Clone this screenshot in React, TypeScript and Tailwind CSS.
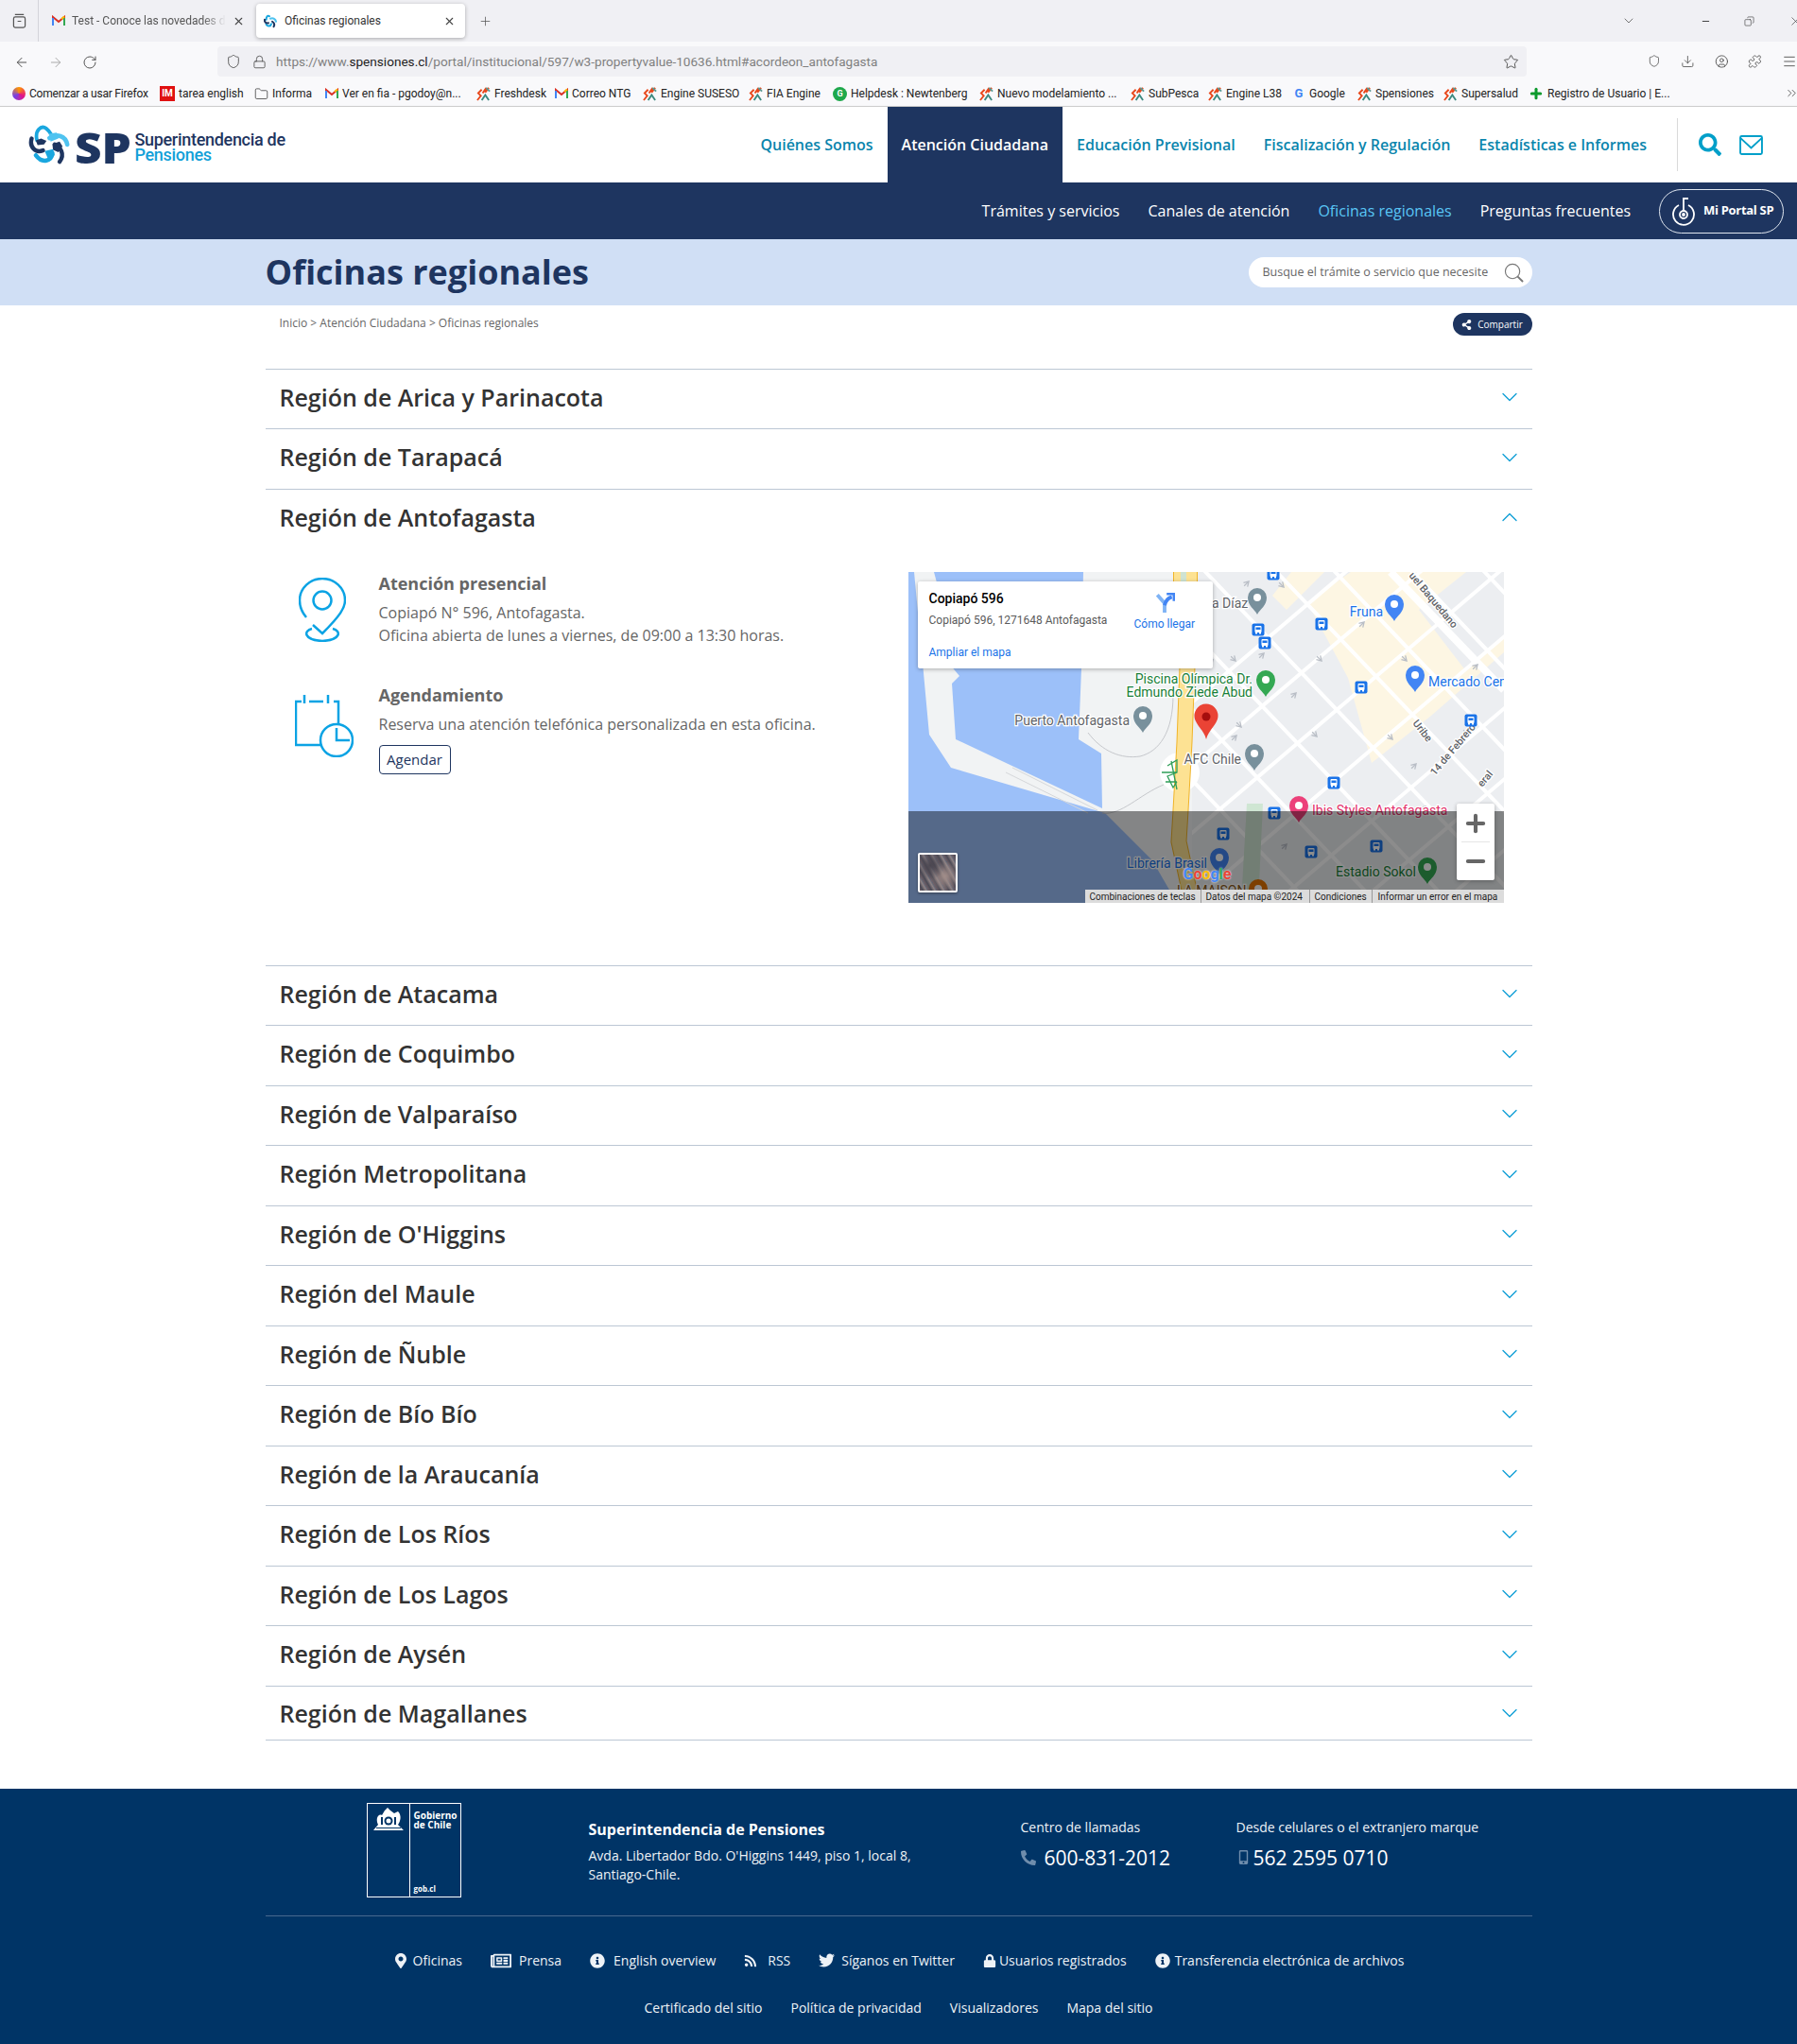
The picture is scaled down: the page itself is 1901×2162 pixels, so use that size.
import React from 'react';
import { ArrowLeft, ArrowRight, RotateCw, Shield, Lock, Star, Download, Menu, Puzzle, CircleUser, Plus, X, ChevronDown, ChevronUp, Minus, Folder, Copy, ChevronsRight } from 'lucide-react';
import { FaMapMarkerAlt, FaRegNewspaper, FaInfoCircle, FaRss, FaTwitter, FaLock, FaPhone, FaMobileAlt, FaSearch, FaShareAlt } from 'react-icons/fa';

const Gmail = () => (
  <svg viewBox="0 0 14 12" className="w-[14px] h-[12px] shrink-0" fill="none">
    <path d="M1 11V2l6 5 6-5v9" stroke="#d93025" strokeWidth="2" />
    <path d="M1 11V3" stroke="#4285f4" strokeWidth="2" />
    <path d="M13 11V3" stroke="#34a853" strokeWidth="2" />
    <path d="M10 4l3-2.500" stroke="#fbbc04" strokeWidth="2" />
  </svg>
);
const Zig = () => (
  <svg viewBox="0 0 16 17" className="w-[15px] h-[16px] shrink-0" fill="none" strokeWidth="2">
    <path d="M1 16l4-5-3-3 4-4" stroke="#e8481c" />
    <path d="M6 16l4-6 4 6" stroke="#3d8a80" />
    <path d="M7 8l4-6-1 5 4-5" stroke="#e8481c" />
    <path d="M11 2l4 4" stroke="#5c9a94" />
  </svg>
);
const StarFav = () => (
  <svg viewBox="25 25 140 135" className="w-[14px] h-[15px] shrink-0" fill="none" strokeLinecap="round" strokeWidth="20">
    <path d="M52 75C50 45 70 25 85 40" stroke="#1aa7df" />
    <path d="M95 65C120 55 150 65 155 95" stroke="#4fc3f0" />
    <path d="M115 95C130 105 145 125 130 150" stroke="#1e3560" />
    <path d="M105 120C100 145 70 155 50 125" stroke="#1aa7df" />
    <path d="M35 75C30 100 50 120 75 110" stroke="#1e3560" />
  </svg>
);
const Logo = () => (
  <svg viewBox="25 25 140 135" className="w-[44px] h-[44px] shrink-0" fill="none" strokeLinecap="round">
    <path d="M54 78C46 45 68 26 85 38C95 45 100 54 106 64" stroke="#1aa7df" strokeWidth="12" />
    <path d="M50 78l18-6 18 8-8 12-22 2z" fill="#1e3560" />
    <path d="M96 70C120 54 150 62 156 92" stroke="#4fc3f0" strokeWidth="15" />
    <path d="M94 56l26-4 6 20-26 10z" fill="#4fc3f0" />
    <path d="M114 92C132 100 150 124 130 150" stroke="#1e3560" strokeWidth="14" />
    <path d="M106 90l24-8 10 16-14 20-18-8z" fill="#1e3560" />
    <path d="M106 120C104 148 72 158 50 128" stroke="#1aa7df" strokeWidth="14" />
    <path d="M80 114l28-6 6 20-24 10z" fill="#1aa7df" />
    <path d="M36 72C28 100 48 122 74 112" stroke="#1e3560" strokeWidth="14" />
  </svg>
);

const bookmarks: { icon: React.ReactNode; label: string; cls: string }[] = [
  { icon: <span className="w-[14px] h-[14px] rounded-full bg-[conic-gradient(#ff9500,#e31587,#7542e5,#ff9500)] shrink-0" />, label: 'Comenzar a usar Firefox', cls: 'w-[126px] tracking-[-0.2px]' },
  { icon: <span className="w-[16px] h-[16px] bg-[#e01010] text-white text-[10px] leading-[16px] font-bold text-center shrink-0">IM</span>, label: 'tarea english', cls: 'w-[68px]' },
  { icon: <Folder size={15} strokeWidth={1.3} className="text-[#444] shrink-0" />, label: 'Informa', cls: 'w-[44px]' },
  { icon: <Gmail />, label: 'Ver en fia - pgodoy@n...', cls: 'w-[130px]' },
  { icon: <Zig />, label: 'Freshdesk', cls: 'w-[52px]' },
  { icon: <Gmail />, label: 'Correo NTG', cls: 'w-[63px]' },
  { icon: <Zig />, label: 'Engine SUSESO', cls: 'w-[81px]' },
  { icon: <Zig />, label: 'FIA Engine', cls: 'w-[58px]' },
  { icon: <span className="w-[15px] h-[15px] rounded-full bg-[#1ea84b] text-white text-[9px] leading-[15px] text-center font-bold shrink-0">G</span>, label: 'Helpdesk : Newtenberg', cls: 'w-[124px]' },
  { icon: <Zig />, label: 'Nuevo modelamiento ...', cls: 'w-[129px]' },
  { icon: <Zig />, label: 'SubPesca', cls: 'w-[51px]' },
  { icon: <Zig />, label: 'Engine L38', cls: 'w-[58px]' },
  { icon: <span className="w-[14px] text-[13px] leading-[14px] font-bold text-[#4285f4] text-center shrink-0">G</span>, label: 'Google', cls: 'w-[39px]' },
  { icon: <Zig />, label: 'Spensiones', cls: 'w-[60px]' },
  { icon: <Zig />, label: 'Supersalud', cls: 'w-[59px]' },
  { icon: <Plus size={16} strokeWidth={4.5} className="text-[#0c9a2c] shrink-0" />, label: 'Registro de Usuario | E...', cls: 'w-[126px]' },
];

const BrowserChrome = () => (
  <div className="font-['Roboto',sans-serif] text-[#222]">
    <div className="h-[44px] bg-[#f0f0f4] flex items-stretch">
      <div className="w-[41px] flex items-center justify-center border-r border-[#d4d4da]">
        <svg viewBox="0 0 16 18" className="w-[15px] h-[17px]" fill="none" stroke="#555" strokeWidth="1.3"><rect x="1.500" y="4" width="13" height="12" rx="2" /><path d="M3 1.500h10M6 9h4" /></svg>
      </div>
      <div className="w-[225px] ml-[5px] flex items-center pl-[9px] pr-[12px] gap-[7px]">
        <Gmail />
        <span className="flex-1 text-[12px] overflow-hidden whitespace-nowrap text-[#555] [mask-image:linear-gradient(to_right,black_85%,transparent)]">Test - Conoce las novedades de</span>
        <X size={13} className="text-[#444]" />
      </div>
      <div className="w-[221px] my-[4px] bg-white rounded-[4px] shadow-[0_1px_4px_rgba(0,0,0,0.3)] flex items-center pl-[8px] pr-[10px] gap-[8px]">
        <StarFav />
        <span className="flex-1 text-[12px] text-[#333]">Oficinas regionales</span>
        <X size={13} className="text-[#444]" />
      </div>
      <div className="ml-[14px] flex items-center"><Plus size={15} strokeWidth={1.2} className="text-[#555]" /></div>
      <div className="ml-auto flex items-center">
        <ChevronDown size={16} strokeWidth={1.2} className="text-[#555] mr-[68px]" />
        <Minus size={11} className="text-[#333] mr-[35px]" />
        <Copy size={11} strokeWidth={1.3} className="text-[#333] mr-[36px] scale-x-[-1]" />
        <X size={15} strokeWidth={1} className="text-[#333] mr-[-6px]" />
      </div>
    </div>
    <div className="h-[44px] bg-[#f9f9fb] flex items-center">
      <div className="w-[230px] flex items-center text-[#555] pl-[15px] gap-[20px]">
        <ArrowLeft size={16} strokeWidth={1.5} />
        <ArrowRight size={16} strokeWidth={1.5} className="text-[#aaa]" />
        <RotateCw size={16} strokeWidth={1.5} />
      </div>
      <div className="w-[1385px] h-[32px] bg-[#f0f0f4] rounded-[4px] flex items-center pl-[9px] pr-[8px] mt-[-2px]">
        <Shield size={16} strokeWidth={1.4} className="text-[#555]" />
        <Lock size={15} strokeWidth={1.4} className="text-[#555] ml-[12px]" />
        <span className="ml-[10px] text-[13.6px] text-[#808080]">https://www.<span className="text-[#222]">spensiones.cl</span>/portal/institucional/597/w3-propertyvalue-10636.html#acordeon_antofagasta</span>
        <Star size={17} strokeWidth={1.4} className="text-[#555] ml-auto" />
      </div>
      <div className="flex-1 flex items-center pl-[128px] gap-[21px] text-[#555] overflow-hidden mt-[-3px]">
        <Shield size={15} strokeWidth={1.4} />
        <Download size={16} strokeWidth={1.4} />
        <CircleUser size={16} strokeWidth={1.5} />
        <Puzzle size={16} strokeWidth={1.4} />
        <Menu size={16} strokeWidth={1.4} className="shrink-0" />
      </div>
    </div>
    <div className="h-[25px] bg-[#f9f9fb] border-b border-[#ccc] flex items-center pl-[13px] pb-[2px] gap-[12px] relative overflow-hidden">
      {bookmarks.map((b) => (
        <div key={b.label} className="flex items-center gap-[4px] shrink-0">
          {b.icon}
          <span className={`${b.cls} text-[12px] whitespace-nowrap text-[#222]`}>{b.label}</span>
        </div>
      ))}
      <ChevronsRight size={15} strokeWidth={1.2} className="absolute right-[-2px] top-[3px] text-[#333]" />
    </div>
  </div>
);

const nav = ['Quiénes Somos', 'Atención Ciudadana', 'Educación Previsional', 'Fiscalización y Regulación', 'Estadísticas e Informes'];

const Header = () => (
  <header className="h-[80px] flex items-stretch bg-white">
    <div className="flex items-center pl-[30px]">
      <Logo />
      <span className="inline-block origin-left scale-x-[1.1] font-['Open_Sans',sans-serif] font-extrabold text-[45px] leading-none text-[#1e3560] ml-[5px] mt-[5px]">SP</span>
      <div className="ml-[9px] mt-[5px] font-['Roboto',sans-serif] font-medium text-[18px] leading-[16px] tracking-[-0.3px]">
        <div className="text-[#1e3560]">Superintendencia de</div>
        <div className="text-[#12a0d8]">Pensiones</div>
      </div>
    </div>
    <nav className="ml-auto flex items-stretch">
      {nav.map((n, i) => (
        <a key={n} className={i === 1 ? 'px-[15px] flex items-center text-[16px] font-semibold bg-[#1e3560] text-white' : 'px-[15px] flex items-center text-[16px] font-semibold text-[#0a85ad]'}>{n}</a>
      ))}
    </nav>
    <div className="flex items-center ml-[17px] pr-[36px]">
      <div className="w-px h-[56px] bg-[#d9d9d9] mr-[22px]" />
      <FaSearch size={24} className="text-[#009fc9]" />
      <svg viewBox="0 0 26 22" className="w-[25px] h-[21px] ml-[19px]" fill="none" stroke="#009fc9" strokeWidth="2"><rect x="1" y="1" width="24" height="20" rx="1.500" /><path d="M1 3l12 11L25 3" /></svg>
    </div>
  </header>
);

const sub = ['Trámites y servicios', 'Canales de atención', 'Oficinas regionales', 'Preguntas frecuentes'];

const SubNav = () => (
  <div className="h-[60px] bg-[#1e3560] flex items-center justify-end gap-[30px] pr-[14px]">
    {sub.map((s, i) => (
      <a key={s} className={i === 2 ? 'text-[16px] text-[#59c6f5]' : 'text-[16px] text-white'}>{s}</a>
    ))}
    <div className="w-[132px] h-[47px] border border-[#dfe6ef] rounded-full flex items-center pl-[12px] gap-[8px]">
      <svg viewBox="0 0 26 32" className="w-[26px] h-[32px]" fill="none" stroke="white" strokeWidth="1.8"><path d="M8 10a11 11 0 1 0 10 0" /><circle cx="13" cy="20" r="4" /><circle cx="13" cy="20" r="1" /><path d="M13 16V3h5" /></svg>
      <span className="text-[13px] font-bold text-white tracking-[-0.3px] whitespace-nowrap">Mi Portal SP</span>
    </div>
  </div>
);

const TitleBand = () => (
  <div className="h-[70px] bg-[#d0dff5]">
    <div className="w-[1340px] mx-auto h-full flex items-center justify-between">
      <h1 className="text-[36px] font-bold text-[#1e3560]">Oficinas regionales</h1>
      <div className="w-[300px] h-[32px] bg-white rounded-full flex items-center pl-[15px] pr-[9px]">
        <span className="flex-1 text-[12.5px] text-[#666] whitespace-nowrap">Busque el trámite o servicio que necesite</span>
        <svg viewBox="0 0 22 22" className="w-[21px] h-[21px]" fill="none" stroke="#777" strokeWidth="1.2"><circle cx="9.500" cy="9.500" r="8" /><path d="M15 15l6 6" strokeWidth="2" /></svg>
      </div>
    </div>
  </div>
);

const Crumbs = () => (
  <div className="w-[1340px] mx-auto h-[67px] flex justify-between items-start pt-[8px]">
    <p className="pl-[15px] pt-[3px] text-[12px] leading-[16px] text-[#666]">Inicio &gt; Atención Ciudadana &gt; Oficinas regionales</p>
    <a className="w-[84px] h-[24px] bg-[#1e3560] rounded-full text-white flex items-center justify-center gap-[6px] text-[10px]"><FaShareAlt size={11} />Compartir</a>
  </div>
);

const rowKinds = {
  upper: 'h-[63.4px] border-t',
  lower: 'h-[63.5px] border-t',
  last: 'h-[58px] border-t border-b',
};

const Row = ({ title, open, kind }: { title: string; open?: boolean; kind: keyof typeof rowKinds }) => (
  <div className={`${rowKinds[kind]} border-[#bcc7d4] flex items-center pl-[15px] pr-[16px] justify-between`}>
    <h2 className={kind === 'last' ? 'text-[25px] font-semibold text-[#333] mt-[2px]' : 'text-[25px] font-semibold text-[#333] mt-[-3px]'}>{title}</h2>
    {open ? <ChevronUp size={28} strokeWidth={1.15} className="text-[#119fd6] mt-[-4px] mr-[-6px]" /> : <ChevronDown size={28} strokeWidth={1.15} className={kind === 'last' ? 'text-[#119fd6] mt-[1px] mr-[-6px]' : 'text-[#119fd6] mt-[-4px] mr-[-6px]'} />}
  </div>
);

const Pin = ({ x, y, c, glyph }: { x: number; y: number; c: string; glyph?: string }) => (
  <g transform={`translate(${x} ${y})`}>
    <path d="M0 15C-3 9-10 6-10 -3A10 10 0 0 1 10 -3C10 6 3 9 0 15Z" fill={c} />
    <circle cx="0" cy="-3" r="4" fill={glyph || 'white'} />
  </g>
);
const Bus = ({ x, y }: { x: number; y: number }) => (
  <g transform={`translate(${x - 6.500} ${y - 6.500})`}>
    <rect width="13" height="13" rx="2" fill="#1a73e8" />
    <rect x="3" y="2.500" width="7" height="7" rx="1" fill="white" />
    <rect x="4" y="4" width="5" height="2.500" fill="#1a73e8" />
    <rect x="3.500" y="9.500" width="2" height="1.500" fill="white" />
    <rect x="7.500" y="9.500" width="2" height="1.500" fill="white" />
  </g>
);

const nw = [-640, -560, -474, -409, -330, -251, -170, -95];
const ne = [393, 460, 531, 604, 680, 755, 830, 905];
const buses: [number, number][] = [[370, 61], [377, 75], [386, 2], [437, 55], [479, 122], [595, 157], [450, 223], [387, 255], [333, 277], [426, 296], [495, 290]];
const arrows: [number, number, number][] = [[358, 12, 45], [395, 14, 135], [344, 92, 135], [320, 95, 45], [374, 88, 45], [435, 92, 135], [480, 55, 45], [525, 92, 135], [350, 162, 135], [345, 175, 45], [408, 130, 45], [430, 172, 135], [510, 175, 135], [535, 205, 45], [590, 170, 135], [600, 100, 45], [398, 290, 45], [510, 255, 135], [545, 250, 45]];

const MapBox = () => (
  <div className="relative w-[630px] h-[350px] overflow-hidden bg-[#f1f3f4] font-['Roboto',sans-serif]">
    <svg viewBox="0 0 630 350" className="block w-[630px] h-[350px]">
      <defs>
        <clipPath id="city"><path d="M300 0H630V350H300Z" /></clipPath>
      </defs>
      <rect width="630" height="350" fill="#f1f3f4" />
      <path d="M0 0H6L14 85L22 172L45 207L208 255L258 305L284 350H0Z" fill="#9cc0f9" />
      <path d="M27 0H185L183 102L180 177L204 192L205 250L50 177L46 118L54 110L44 98L35 30Z" fill="#9cc0f9" />
      <path d="M103 212L190 255M110 207L200 252" fill="none" stroke="#d5d7da" />
      <path d="M190 170C205 190 225 198 245 195C265 190 280 170 280 130" fill="none" stroke="#c6c8cc" />
      <path d="M205 255C225 258 245 235 270 225" fill="none" stroke="#c6c8cc" />
      <g clipPath="url(#city)">
        <rect x="300" width="330" height="350" fill="#eceef1" />
        <path d="M422 32L468 0H630V85L553 152L490 202L465 112Z" fill="#fdf6e3" />
        <path d="M405 0L440 0L400 40L385 25Z" fill="#fdf6e3" />
        <path d="M540 40L590 0H630V70L590 105Z" fill="#eceef1" />
        {nw.map((c) => <line key={c} x1="250" y1={1.05 * 250 + c} x2="700" y2={1.05 * 700 + c} stroke="white" strokeWidth="4" />)}
        {ne.map((d) => <line key={d} x1="250" y1={-0.85 * 250 + d} x2="700" y2={-0.85 * 700 + d} stroke="white" strokeWidth="4" />)}
        <path d="M510 0L630 125" stroke="white" strokeWidth="8" />
      </g>
      <path d="M358 245L352 350H370L375 245Z" fill="#cfe6d3" />
      <circle cx="287" cy="212" r="21" fill="white" />
      <path d="M295 0V100L292 180L288 252L286 285L300 350" fill="none" stroke="#f0b429" strokeWidth="17" />
      <path d="M295 0V100L292 180L288 252L286 285L300 350" fill="none" stroke="#fde293" strokeWidth="15" />
      <path d="M293 0V102" stroke="#f0b429" strokeWidth="26" />
      <path d="M293 0V102" stroke="#fde293" strokeWidth="24" />
      <path d="M291 0V102" stroke="#cfe3d2" strokeWidth="6" />
      <path d="M274 205L284 199L284 212L274 216L280 228L284 222M268 212L284 212M272 222L284 222M278 200L284 230" stroke="#2f9e58" strokeWidth="1.300" fill="none" />
      {arrows.map(([x, y, r], i) => <path key={i} d="M-3 2L0 -3L3 2M0 -3V4" transform={`translate(${x} ${y}) rotate(${r})`} fill="none" stroke="#b9bec6" strokeWidth="1.300" />)}
      <g className="[paint-order:stroke] stroke-white stroke-[2.5px]" fontSize="14">
        <text x="321" y="38" fill="#5f6368">a Díaz</text>
        <text x="502" y="47" textAnchor="end" fill="#1a73e8">Fruna</text>
        <text x="550" y="121" fill="#1a73e8">Mercado Central</text>
        <text x="364" y="118" textAnchor="end" fill="#188038">Piscina Olímpica Dr.</text>
        <text x="364" y="132" textAnchor="end" fill="#188038">Edmundo Ziede Abud</text>
        <text x="234" y="162" textAnchor="end" fill="#5f6368">Puerto Antofagasta</text>
        <text x="352" y="203" textAnchor="end" fill="#5f6368">AFC Chile</text>
        <text x="427" y="257" fill="#e3306b">Ibis Styles Antofagasta</text>
        <text x="316" y="313" textAnchor="end" fill="#1a73e8">Librería Brasil</text>
        <text x="537" y="322" textAnchor="end" fill="#188038">Estadio Sokol</text>
        <text x="284" y="342" fill="#8a5a20">LA MAISON</text>
      </g>
      <g className="[paint-order:stroke] stroke-white stroke-[2.5px]" fontSize="11" fill="#5f6368" fontWeight="500">
        <text transform="translate(529 4) rotate(50)">uel Baquedano</text>
        <text transform="translate(533 160) rotate(52)">Uribe</text>
        <text transform="translate(557 216) rotate(-50)">14 de Febrero</text>
        <text transform="translate(607 228) rotate(-50)">eral</text>
      </g>
      <Pin x={369} y={30} c="#78909c" />
      <Pin x={514} y={37} c="#4285f4" />
      <Pin x={536} y={112} c="#4285f4" />
      <Pin x={378} y={117} c="#34a853" />
      <Pin x={248} y={155} c="#78909c" />
      <Pin x={366} y={195} c="#78909c" />
      <Pin x={413} y={250} c="#ec407a" />
      <Pin x={329} y={305} c="#4285f4" />
      <Pin x={549} y={315} c="#34a853" />
      <Pin x={370} y={338} c="#e37400" />
      {buses.map(([x, y]) => <Bus key={`${x}-${y}`} x={x} y={y} />)}
      <g transform="translate(315 153)">
        <path d="M0 24C-3 13-12.500 8-12.500 -1A12.500 12.500 0 0 1 12.500 -1C12.500 8 3 13 0 24Z" fill="#ea4335" />
        <circle cy="0" r="4.500" fill="#a50e0e" />
      </g>
    </svg>
    <div className="absolute left-0 right-0 bottom-0 h-[97px] bg-black/45" />
    <span className="absolute left-[291px] top-[310px] text-[16px] leading-[20px] font-bold [text-shadow:0_0_2px_white]"><span className="text-[#4285f4]">G</span><span className="text-[#ea4335]">o</span><span className="text-[#fbbc04]">o</span><span className="text-[#4285f4]">g</span><span className="text-[#34a853]">l</span><span className="text-[#ea4335]">e</span></span>
    <div className="absolute left-[10px] top-[10px] w-[312px] h-[92px] bg-white rounded-[2px] shadow-[0_1px_4px_rgba(0,0,0,0.3)]">
      <div className="absolute left-[12px] top-[9px] text-[14px] leading-[18px] font-medium text-black">Copiapó 596</div>
      <div className="absolute left-[12px] top-[33px] text-[12px] leading-[16px] text-[#5b5b5b] whitespace-nowrap">Copiapó 596, 1271648 Antofagasta</div>
      <div className="absolute left-[12px] top-[67px] text-[12px] leading-[16px] text-[#1a73e8]">Ampliar el mapa</div>
      <svg viewBox="0 0 20 20" className="absolute left-[250px] top-[12px] w-[22px] h-[22px]" fill="none" strokeWidth="3.500"><path d="M3 2l7 8v9" stroke="#7fb3f5" /><path d="M10 12c1-4 3-7 7-8" stroke="#4285f4" /><path d="M12 1h7v7" stroke="#4285f4" strokeWidth="2.500" /></svg>
      <div className="absolute left-[229px] top-[37px] w-[64px] text-center text-[12px] leading-[16px] text-[#1a73e8] whitespace-nowrap">Cómo llegar</div>
    </div>
    <div className="absolute left-[580px] top-[245px] w-[40px] h-[81px] bg-white rounded-[2px] flex flex-col items-center justify-between py-[6.5px] text-[#666] shadow-[0_1px_4px_rgba(0,0,0,0.3)]">
      <Plus size={28} strokeWidth={3.5} />
      <div className="absolute left-[5px] right-[5px] top-[40px] h-px bg-[#e6e6e6]" />
      <Minus size={28} strokeWidth={3.5} />
    </div>
    <div className="absolute left-[10px] top-[297px] w-[42px] h-[42px] border-2 border-white rounded-[2px] bg-[radial-gradient(circle_at_30%_30%,#4a4650_0,transparent_40%),radial-gradient(circle_at_70%_60%,#a08c88_0,transparent_45%),repeating-linear-gradient(60deg,#6f6068,#4b4a55_3px,#8f8385_6px,#5a6070_8px)] shadow-[0_1px_3px_rgba(0,0,0,0.4)]" />
    <div className="absolute left-[187px] right-0 bottom-0 h-[14px] flex bg-[#dcdcdc] text-[10px] leading-[15px] text-[#222] whitespace-nowrap">
      <span className="w-[123px] pl-[5px] border-r border-[#999]">Combinaciones de teclas</span>
      <span className="w-[115px] pl-[5px] border-r border-[#999]">Datos del mapa ©2024</span>
      <span className="w-[66px] pl-[5px] border-r border-[#999]">Condiciones</span>
      <span className="pl-[6px]">Informar un error en el mapa</span>
    </div>
  </div>
);

const Panel = () => (
  <div className="h-[440.8px] flex">
    <div className="w-[680px]">
      <div className="flex pt-[24px]">
        <div className="w-[120px] pl-[35px] pt-[7px]">
          <svg viewBox="0 0 50 68" className="w-[50px] h-[68px]" fill="none" stroke="#0ba3e4" strokeWidth="2.500"><path d="M8 42C3 36 1 30 1 24C1 11 12 1 25 1C38 1 49 11 49 24C49 32 44 40 25 59L15 50" /><circle cx="25" cy="24" r="9.500" /><path d="M14 54C5 56 5 66 25 67C45 66 45 56 36 54" /></svg>
        </div>
        <div>
          <h3 className="text-[18px] leading-[26px] font-bold text-[#666]">Atención presencial</h3>
          <p className="mt-[6px] text-[16px] leading-[24px] text-[#666]">Copiapó N° 596, Antofagasta.<br />Oficina abierta de lunes a viernes, de 09:00 a 13:30 horas.</p>
        </div>
      </div>
      <div className="flex mt-[38px]">
        <div className="w-[120px] pl-[31px] pt-[13px]">
          <svg viewBox="0 0 62 66" className="w-[62px] h-[66px]" fill="none" stroke="#0ba3e4" strokeWidth="2.500"><path d="M7 7H1V53H27" /><path d="M10 0V9M15 7H30M35 0V9" /><path d="M41 7H46V30" /><circle cx="44" cy="48" r="17" /><path d="M44 35V48H58" /></svg>
        </div>
        <div>
          <h3 className="text-[18px] leading-[26px] font-bold text-[#666]">Agendamiento</h3>
          <p className="mt-[6px] text-[16px] leading-[24px] text-[#666]">Reserva una atención telefónica personalizada en esta oficina.</p>
          <button className="mt-[10px] w-[76px] h-[31px] border border-[#1e3560] rounded-[4px] text-[15px] text-[#1e3560] flex items-center justify-center">Agendar</button>
        </div>
      </div>
    </div>
    <div className="pt-[25px]"><MapBox /></div>
  </div>
);

const before = ['Región de Arica y Parinacota', 'Región de Tarapacá'];
const after = ['Región de Atacama', 'Región de Coquimbo', 'Región de Valparaíso', 'Región Metropolitana', "Región de O'Higgins", 'Región del Maule', 'Región de Ñuble', 'Región de Bío Bío', 'Región de la Araucanía', 'Región de Los Ríos', 'Región de Los Lagos', 'Región de Aysén'];

const links: [React.ReactNode, string, string][] = [
  [<FaMapMarkerAlt size={16} />, 'Oficinas', 'w-[21px]'],
  [<FaRegNewspaper size={22} />, 'Prensa', 'w-[30px]'],
  [<FaInfoCircle size={16} />, 'English overview', 'w-[25px]'],
  [<FaRss size={14} />, 'RSS', 'w-[25px]'],
  [<FaTwitter size={17} />, 'Síganos en Twitter', 'w-[24px]'],
  [<FaLock size={14} />, 'Usuarios registrados', 'w-[17px]'],
  [<FaInfoCircle size={16} />, 'Transferencia electrónica de archivos', 'w-[21px]'],
];

const Footer = () => (
  <footer className="h-[270px] bg-[#003466] text-[#eef2f6]">
    <div className="w-[1340px] mx-auto">
      <div className="h-[135px] border-b border-[#48698f] grid grid-cols-[342px_457px_228px_1fr]">
        <div className="pl-[107px] pt-[15px]">
          <div className="w-[100px] h-[100px] border border-white flex">
            <div className="w-[45px] border-r border-white pt-[4px] flex justify-center">
              <svg viewBox="0 0 34 26" className="w-[34px] h-[26px]" fill="white"><path d="M6 18C3 12 6 6 10 8L13 3L16 0L19 3L23 6L27 4C31 8 30 14 27 18L33 24H1Z" /><circle cx="17" cy="14" r="4.500" fill="#003466" /><circle cx="17" cy="14" r="2.500" /><path d="M9 10h2v8H9zM23 10h2v8h-2z" fill="#003466" /><path d="M4 21h26v1H4z" fill="#003466" /></svg>
            </div>
            <div className="flex-1 pl-[4px] pt-[7px] flex flex-col justify-between pb-[3px] text-[10px] leading-[10px] font-bold text-white">
              <div>Gobierno<br />de Chile</div>
              <div className="text-[8px]">gob.cl</div>
            </div>
          </div>
        </div>
        <div className="pt-[32px]">
          <h4 className="text-[16px] leading-[22px] font-bold text-white">Superintendencia de Pensiones</h4>
          <p className="mt-[7px] text-[14px] leading-[20px]">Avda. Libertador Bdo. O'Higgins 1449, piso 1, local 8,<br />Santiago-Chile.</p>
        </div>
        <div className="pt-[31px]">
          <p className="text-[14px] leading-[20px]">Centro de llamadas</p>
          <p className="mt-[7px] flex items-center text-[21px] leading-[30px] text-white"><span className="w-[25px]"><FaPhone size={16} className="text-[#6f8dac] scale-x-[-1]" /></span>600-831-2012</p>
        </div>
        <div className="pt-[31px]">
          <p className="text-[14px] leading-[20px]">Desde celulares o el extranjero marque</p>
          <p className="mt-[7px] flex items-center text-[21px] leading-[30px] text-white"><span className="w-[18px]"><FaMobileAlt size={15} className="text-[#6f8dac]" /></span>562 2595 0710</p>
        </div>
      </div>
      <div className="flex justify-center gap-[30px] pt-[36px] text-[14px] leading-[20px]">
        {links.map(([ic, t, w]) => (
          <a key={t} className="flex items-center whitespace-nowrap"><span className={`${w} flex items-center`}>{ic}</span>{t}</a>
        ))}
      </div>
      <div className="flex justify-center gap-[30px] pt-[29px] text-[14px] leading-[20px]">
        <a>Certificado del sitio</a><a>Política de privacidad</a><a>Visualizadores</a><a>Mapa del sitio</a>
      </div>
    </div>
  </footer>
);

export default function App() {
  return (
    <div className="w-[1901px] min-h-[2162px] bg-white font-['Open_Sans',sans-serif] overflow-hidden">
      <BrowserChrome />
      <Header />
      <SubNav />
      <TitleBand />
      <Crumbs />
      <main className="w-[1340px] mx-auto">
        {before.map((t) => <Row key={t} title={t} kind="upper" />)}
        <Row title="Región de Antofagasta" open kind="upper" />
        <Panel />
        {after.map((t) => <Row key={t} title={t} kind="lower" />)}
        <Row title="Región de Magallanes" kind="last" />
      </main>
      <div className="h-[51px]" />
      <Footer />
    </div>
  );
}
